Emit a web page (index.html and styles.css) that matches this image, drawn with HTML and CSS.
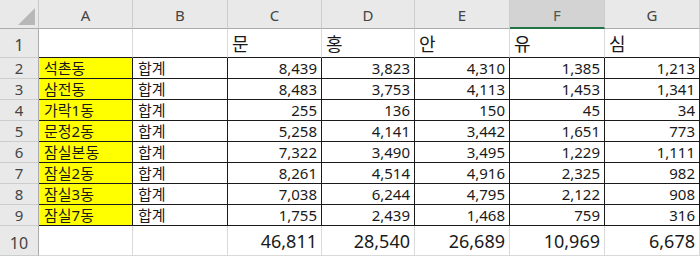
FILE: index.html
```html
<!DOCTYPE html>
<html lang="ko">
<head>
<meta charset="utf-8">
<link rel="stylesheet" href="styles.css">
</head>
<body>
<div class="sheet">
  <div class="corner"><svg class="tri" width="20" height="20" viewBox="0 0 20 20"><polygon points="19,2 19,19 2,19" fill="#b8b8b8"/></svg></div>
  <div class="ch">A</div><div class="ch">B</div><div class="ch">C</div><div class="ch">D</div><div class="ch">E</div><div class="ch sel">F</div><div class="ch">G</div>

  <div class="rh r1">1</div>
  <div class="c r1 top"></div><div class="c r1 top"></div><div class="c r1 top t1">문</div><div class="c r1 top t1">홍</div><div class="c r1 top t1">안</div><div class="c r1 top t1">유</div><div class="c r1 top t1">심</div>

  <div class="rh">2</div>
  <div class="c b y">석촌동</div><div class="c b">합계</div><div class="c b n">8,439</div><div class="c b n">3,823</div><div class="c b n">4,310</div><div class="c b n">1,385</div><div class="c b n">1,213</div>

  <div class="rh">3</div>
  <div class="c b y">삼전동</div><div class="c b">합계</div><div class="c b n">8,483</div><div class="c b n">3,753</div><div class="c b n">4,113</div><div class="c b n">1,453</div><div class="c b n">1,341</div>

  <div class="rh">4</div>
  <div class="c b y">가락1동</div><div class="c b">합계</div><div class="c b n">255</div><div class="c b n">136</div><div class="c b n">150</div><div class="c b n">45</div><div class="c b n">34</div>

  <div class="rh">5</div>
  <div class="c b y">문정2동</div><div class="c b">합계</div><div class="c b n">5,258</div><div class="c b n">4,141</div><div class="c b n">3,442</div><div class="c b n">1,651</div><div class="c b n">773</div>

  <div class="rh">6</div>
  <div class="c b y">잠실본동</div><div class="c b">합계</div><div class="c b n">7,322</div><div class="c b n">3,490</div><div class="c b n">3,495</div><div class="c b n">1,229</div><div class="c b n">1,111</div>

  <div class="rh">7</div>
  <div class="c b y">잠실2동</div><div class="c b">합계</div><div class="c b n">8,261</div><div class="c b n">4,514</div><div class="c b n">4,916</div><div class="c b n">2,325</div><div class="c b n">982</div>

  <div class="rh">8</div>
  <div class="c b y">잠실3동</div><div class="c b">합계</div><div class="c b n">7,038</div><div class="c b n">6,244</div><div class="c b n">4,795</div><div class="c b n">2,122</div><div class="c b n">908</div>

  <div class="rh">9</div>
  <div class="c b y">잠실7동</div><div class="c b">합계</div><div class="c b n">1,755</div><div class="c b n">2,439</div><div class="c b n">1,468</div><div class="c b n">759</div><div class="c b n">316</div>

  <div class="rh r10">10</div>
  <div class="c r10"></div><div class="c r10"></div><div class="c r10 n big">46,811</div><div class="c r10 n big">28,540</div><div class="c r10 n big">26,689</div><div class="c r10 n big">10,969</div><div class="c r10 n big">6,678</div>
</div>
</body>
</html>
```
FILE: styles.css
```css
html, body {
  margin: 0;
  padding: 0;
  background: #ffffff;
  overflow: hidden;
}
.sheet {
  display: grid;
  grid-template-columns: 39px 94px 95px 94px 93px 95px 95px 95px;
  grid-template-rows: 29px 29px repeat(8, 21px) 30px;
  font-family: "Noto Sans", "Noto Sans CJK KR", sans-serif;
  color: #1a1a1a;
}
.corner {
  background: #e9e9e9;
  border-right: 1px solid #c8c8c8;
  border-bottom: 1px solid #ababab;
  box-sizing: border-box;
  display: flex;
  align-items: flex-end;
  justify-content: flex-end;
  padding: 0 2px 2px 0;
}
.tri { display: block; }
.ch {
  background: #e9e9e9;
  border-right: 1px solid #cdcdcd;
  border-bottom: 1px solid #ababab;
  box-sizing: border-box;
  display: flex;
  align-items: center;
  justify-content: center;
  font-size: 15px;
  color: #444;
  padding-top: 2px;
}
.ch.sel {
  background: #d3d3d3;
  border-bottom: 2px solid #217346;
  color: #4a5a4f;
}
.rh {
  background: #e9e9e9;
  border-right: 1px solid #ababab;
  border-bottom: 1px solid #cdcdcd;
  box-sizing: border-box;
  display: flex;
  align-items: flex-end;
  justify-content: center;
  font-size: 15px;
  color: #444;
  line-height: 20px;
}
.rh.r1, .rh.r10 { padding-bottom: 2px; font-size: 16px; }
.c {
  box-sizing: border-box;
  border-right: 1px solid #d9d9d9;
  border-bottom: 1px solid #d9d9d9;
  display: flex;
  align-items: flex-end;
  padding: 0 4px 0 5px;
  font-size: 15px;
  line-height: 20px;
  white-space: nowrap;
  overflow: hidden;
}
.c.top { border-bottom-color: #1a1a1a; }
.c.b {
  border-right-color: #1a1a1a;
  border-bottom-color: #1a1a1a;
}
.c.y { background: #ffff00; }
.c.n { justify-content: flex-end; }
.t1 {
  font-size: 18px;
  padding-left: 4px;
  line-height: 24px;
  padding-bottom: 1px;
}
.big {
  font-size: 18px;
  line-height: 26px;
  padding-bottom: 1px;
}
```
